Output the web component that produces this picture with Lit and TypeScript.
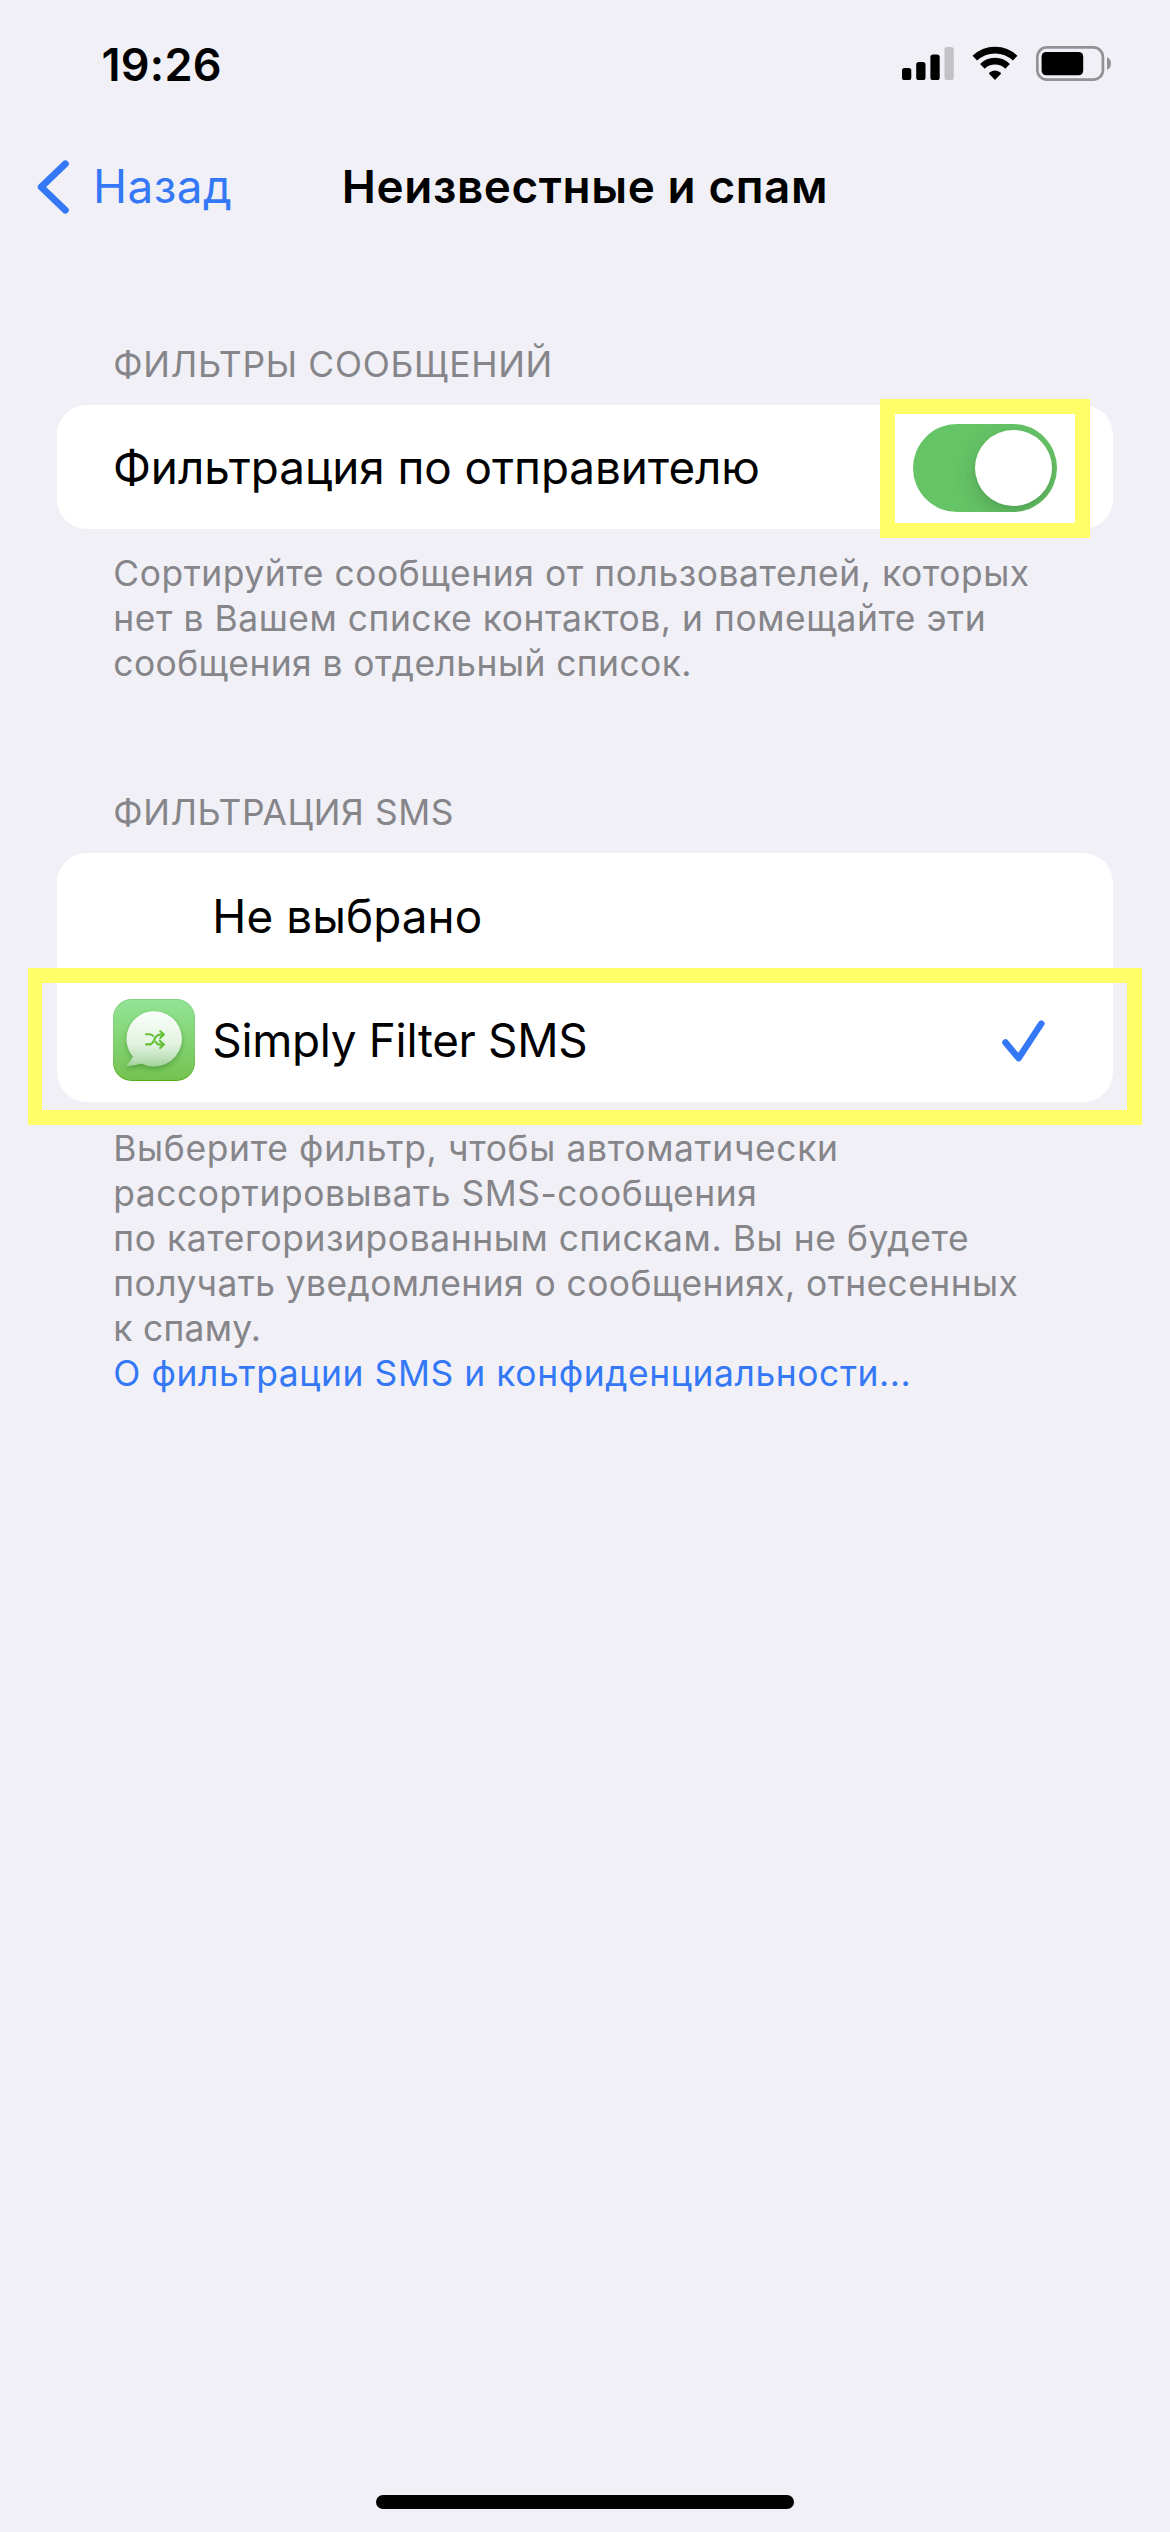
import { LitElement, html, css, svg } from "lit";
import { customElement, property } from "lit/decorators.js";
import { styleMap } from "lit/directives/style-map.js";

interface Line {
  text: string;
  tracking: number;
}

const line = (text: string, tracking: number): Line => ({ text, tracking });

const SENDER_NOTE: Line[] = [
  line("Сортируйте сообщения от пользователей, которых", 0.56),
  line("нет в Вашем списке контактов, и помещайте эти", 0.548),
  line("сообщения в отдельный список.", 0.428),
];

const SMS_NOTE: Line[] = [
  line("Выберите фильтр, чтобы автоматически", 0.66),
  line("рассортировывать SMS-сообщения", 0.555),
  line("по категоризированным спискам. Вы не будете", 0.59),
  line("получать уведомления о сообщениях, отнесенных", 0.425),
  line("к спаму.", 0.269),
];

/** A single line of text with its own letter spacing. */
@customElement("text-line")
class TextLine extends LitElement {
  static styles = css`
    :host {
      display: block;
      white-space: nowrap;
    }
  `;
  @property({ attribute: false }) text = "";
  @property({ type: Number }) tracking = 0;

  render() {
    return html`<span style=${styleMap({ letterSpacing: `${this.tracking}px` })}>${this.text}</span>`;
  }
}

@customElement("status-bar")
class StatusBar extends LitElement {
  static styles = css`
    :host {
      display: flex;
      justify-content: space-between;
      align-items: center;
      box-sizing: border-box;
      height: 128px;
      padding: 0 59px 0 101.5px;
      font-size: 45px;
      font-weight: 600;
      color: #000;
    }
    .icons {
      display: flex;
      align-items: center;
      padding-bottom: 1px;
    }
    .icons svg {
      display: block;
    }
    .wifi {
      margin-left: 18px;
      margin-right: 18px;
    }
  `;

  render() {
    return html`
      <text-line .text=${"19:26"} .tracking=${0.276}></text-line>
      <div class="icons">
        <svg width="52" height="35" viewBox="0 0 52 35">
          ${[
            [0, 22],
            [14.2, 16],
            [28.4, 8.5],
            [42.5, 1],
          ].map(
            ([x, y], i) =>
              svg`<rect x=${x} y=${y} width="9.3" height=${34 - y} rx="2.6" fill=${i === 3 ? "#c3c2c7" : "#000"} />`
          )}
        </svg>
        <svg class="wifi" width="46" height="35" viewBox="0 0 46 35">
          <g fill="none" stroke="#000">
            <path d="M2.8 12.2A29.2 29.2 0 0 1 43.2 12.2" stroke-width="6.6" />
            <path d="M10.4 20.3A18 18 0 0 1 35.6 20.3" stroke-width="6.6" />
          </g>
          <path d="M23 34L17.2 27.9Q16.7 27.2 17.5 26.6Q23 22.4 28.5 26.6Q29.3 27.2 28.8 27.9Z" />
        </svg>
        <svg width="75" height="35" viewBox="0 0 75 35">
          <rect x="1.3" y="1.4" width="65.6" height="32.3" rx="9.5" fill="none" stroke="#929196" stroke-width="2.7" />
          <rect x="5.6" y="5.9" width="41.6" height="23.3" rx="4.5" />
          <path d="M71 11Q75 13 75 17.5Q75 22 71 24Z" fill="#929196" />
        </svg>
      </div>
    `;
  }
}

@customElement("nav-bar")
class NavBar extends LitElement {
  static styles = css`
    :host {
      display: grid;
      grid-template-columns: 1fr auto 1fr;
      align-items: center;
      height: 117px;
      font-size: 45.8px;
      line-height: 56px;
    }
    .back {
      display: flex;
      align-items: center;
      gap: 24px;
      padding-left: 37px;
      color: #3478f6;
    }
    .back svg {
      display: block;
    }
    .title {
      font-weight: 600;
      color: #000;
    }
  `;

  render() {
    return html`
      <div class="back">
        <svg width="32" height="54" viewBox="0 0 32 54">
          <path
            d="M28.4 3.8L4.2 27L28.4 50.2"
            fill="none"
            stroke="currentColor"
            stroke-width="6.8"
            stroke-linecap="round"
            stroke-linejoin="round"
          />
        </svg>
        <text-line .text=${"Назад"} .tracking=${0.451}></text-line>
      </div>
      <text-line class="title" .text=${"Неизвестные и спам"} .tracking=${0.626}></text-line>
    `;
  }
}

@customElement("toggle-switch")
class ToggleSwitch extends LitElement {
  static styles = css`
    :host {
      display: block;
    }
    .track {
      display: flex;
      justify-content: flex-end;
      align-items: center;
      box-sizing: border-box;
      width: 144px;
      height: 88px;
      padding-right: 5.5px;
      border-radius: 44px;
      background: #65c466;
      overflow: hidden;
    }
    .knob {
      width: 76.6px;
      height: 76.6px;
      border-radius: 50%;
      background: #fff;
      box-shadow: 0 8px 22px rgba(0, 0, 0, 0.17), 0 2px 3px rgba(0, 0, 0, 0.05);
    }
  `;

  render() {
    return html`<div class="track"><div class="knob"></div></div>`;
  }
}

@customElement("filter-app-icon")
class FilterAppIcon extends LitElement {
  static styles = css`
    :host,
    svg {
      display: block;
    }
  `;

  render() {
    return html`
      <svg width="82" height="82" viewBox="0 0 82 82">
        <defs>
          <linearGradient id="tile" x1="0" y1="0" x2="0" y2="1">
            <stop offset="0" stop-color="#93e496" />
            <stop offset="1" stop-color="#75c251" />
          </linearGradient>
          <linearGradient id="rim" x1="0" y1="0" x2="0" y2="1">
            <stop offset="0" stop-color="#7ed583" />
            <stop offset="0.6" stop-color="#79cb68" />
            <stop offset="1" stop-color="#4fae1c" />
          </linearGradient>
          <linearGradient id="bubble" x1="0" y1="0" x2="0" y2="1">
            <stop offset="0" stop-color="#fbfffb" />
            <stop offset="0.6" stop-color="#e2f3e0" />
            <stop offset="0.85" stop-color="#bfe0bb" />
            <stop offset="1" stop-color="#9fd295" />
          </linearGradient>
          <filter id="shade" x="-30%" y="-30%" width="160%" height="160%">
            <feDropShadow dx="0" dy="2.5" stdDeviation="2.4" flood-color="#2c7a1c" flood-opacity="0.5" />
          </filter>
        </defs>
        <rect width="82" height="82" rx="18.5" fill="url(#rim)" />
        <rect x="0.8" y="0.9" width="80.4" height="80" rx="17.8" fill="url(#tile)" />
        <path
          filter="url(#shade)"
          fill="url(#bubble)"
          d="M41.5 12.3A27.6 27.6 0 1 1 28.5 64.4Q21 66.5 13.2 66.9Q18 62.5 20 57.6A27.6 27.6 0 0 1 41.5 12.3Z"
        />
        <g fill="none" stroke="#63bf35" stroke-width="2.1" stroke-linecap="round" stroke-linejoin="round">
          <path d="M33 35.2H36.5Q38.6 35.2 39.9 36.9" />
          <path d="M33 45.4H36.3Q39.2 45.4 40.8 41.6Q42.8 35.6 47.4 35.6H50.5" />
          <path d="M47.2 32.2L50.9 35.6L47.2 39" />
          <path d="M42.6 42.6Q43.8 45.6 47.2 45.6H50.5" />
          <path d="M47.2 42.2L50.9 45.6L47.2 49" />
        </g>
        <circle cx="46.7" cy="41.4" r="1" fill="#63bf35" />
      </svg>
    `;
  }
}

@customElement("app-root")
export class AppRoot extends LitElement {
  static styles = css`
    :host {
      display: flex;
      flex-direction: column;
      box-sizing: border-box;
      width: 1170px;
      height: 2532px;
      overflow: hidden;
      background: #f1f0f6;
      color: #000;
      font-family: Inter, "Liberation Sans", sans-serif;
    }
    main {
      flex: 1;
      padding: 96.6px 56.7px 0;
    }
    .header,
    .footer {
      padding-left: 56.6px;
      font-size: 35.4px;
      color: #85858a;
    }
    .header {
      line-height: 46px;
      margin-bottom: 17px;
    }
    .footer {
      line-height: 45.1px;
      margin-top: 22px;
    }
    .footer.long {
      margin-top: 23.6px;
    }
    .link {
      color: #3478f6;
    }
    .group + .group {
      margin-top: 103.6px;
    }
    .card {
      border-radius: 30px;
      background: #fff;
    }
    .row {
      position: relative;
      display: flex;
      align-items: center;
      box-sizing: border-box;
      height: 124.5px;
      padding: 0 56.3px;
      font-size: 45.8px;
      line-height: 56px;
    }
    .label {
      flex: 1;
      padding-top: 2.6px;
    }
    .thumb {
      width: 82px;
      margin-right: 17.3px;
    }
    .toggle {
      position: relative;
      margin-top: 2px;
    }
    .check {
      display: block;
      margin-right: 12px;
      margin-top: 2px;
    }
    .mark {
      position: absolute;
      border: 15px solid #fffd68;
      pointer-events: none;
    }
    .mark-toggle {
      inset: -25px -33.3px -26px -33.3px;
    }
    .mark-row {
      inset: -9.4px -28.7px -23px -28.7px;
      border-left-width: 14px;
    }
    .home {
      align-self: center;
      width: 418px;
      height: 14px;
      margin-bottom: 23px;
      border-radius: 7px;
      background: #000;
    }
  `;

  private lines(list: Line[]) {
    return list.map((l) => html`<text-line .text=${l.text} .tracking=${l.tracking}></text-line>`);
  }

  render() {
    return html`
      <status-bar></status-bar>
      <nav-bar></nav-bar>
      <main>
        <section class="group">
          <div class="header">${this.lines([line("ФИЛЬТРЫ СООБЩЕНИЙ", 0.72)])}</div>
          <div class="card">
            <div class="row">
              <text-line class="label" .text=${"Фильтрация по отправителю"} .tracking=${-0.045}></text-line>
              <div class="toggle">
                <toggle-switch></toggle-switch>
                <div class="mark mark-toggle"></div>
              </div>
            </div>
          </div>
          <div class="footer">${this.lines(SENDER_NOTE)}</div>
        </section>
        <section class="group">
          <div class="header">${this.lines([line("ФИЛЬТРАЦИЯ SMS", 0.62)])}</div>
          <div class="card">
            <div class="row">
              <div class="thumb"></div>
              <text-line class="label" .text=${"Не выбрано"} .tracking=${0.098}></text-line>
            </div>
            <div class="row">
              <filter-app-icon class="thumb"></filter-app-icon>
              <text-line class="label" .text=${"Simply Filter SMS"} .tracking=${-0.285}></text-line>
              <svg class="check" width="43" height="42" viewBox="0 0 43 42">
                <path
                  d="M3.4 22.4L16.6 38.2L39.4 3.6"
                  fill="none"
                  stroke="#3478f6"
                  stroke-width="6.4"
                  stroke-linecap="round"
                  stroke-linejoin="round"
                />
              </svg>
              <div class="mark mark-row"></div>
            </div>
          </div>
          <div class="footer long">
            ${this.lines(SMS_NOTE)}
            <div class="link">${this.lines([line("О фильтрации SMS и конфиденциальности...", 0.59)])}</div>
          </div>
        </section>
      </main>
      <div class="home"></div>
    `;
  }
}
